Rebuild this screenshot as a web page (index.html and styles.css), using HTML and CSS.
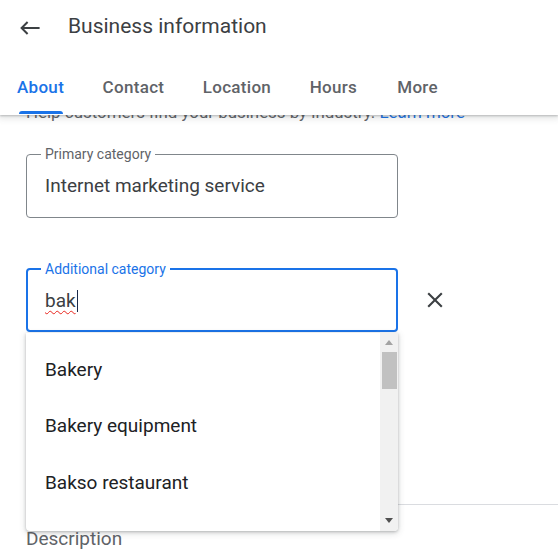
FILE: index.html
```html
<!DOCTYPE html>
<html lang="en">
<head>
<meta charset="utf-8">
<title>Business information</title>
<link rel="stylesheet" href="styles.css">
</head>
<body>
<header class="header">
  <div class="topbar">
    <svg class="back" width="20" height="14" viewBox="0 0 20 14" aria-hidden="true">
      <path d="M19.6 7H1.6M7.6 1L1.6 7L7.6 13" fill="none" stroke="#3c4043" stroke-width="2"/>
    </svg>
    <h1 class="title">Business information</h1>
  </div>
  <nav class="tabs">
    <div class="tab active"><span class="tab-label">About</span><span class="indicator"></span></div>
    <div class="tab"><span class="tab-label">Contact</span><span class="indicator"></span></div>
    <div class="tab"><span class="tab-label">Location</span><span class="indicator"></span></div>
    <div class="tab"><span class="tab-label">Hours</span><span class="indicator"></span></div>
    <div class="tab"><span class="tab-label">More</span><span class="indicator"></span></div>
  </nav>
</header>
<main class="content">
  <p class="help">Help customers find your business by industry. <span class="link">Learn more</span></p>
  <fieldset class="field">
    <legend class="label">Primary category</legend>
    <div class="value">Internet marketing service</div>
  </fieldset>
  <div class="row">
    <fieldset class="field focused">
      <legend class="label">Additional category</legend>
      <div class="value"><span class="misspelled">bak</span><span class="caret"></span></div>
    </fieldset>
    <svg class="close" width="16" height="16" viewBox="0 0 16 16" aria-hidden="true">
      <path d="M1.2 1.2L14.8 14.8M14.8 1.2L1.2 14.8" fill="none" stroke="#3c4043" stroke-width="2.1"/>
    </svg>
    <div class="menu">
      <ul class="options">
        <li class="option">Bakery</li>
        <li class="option">Bakery equipment</li>
        <li class="option">Bakso restaurant</li>
      </ul>
      <div class="scrollbar">
        <div class="sb-btn up"><span class="tri-up"></span></div>
        <div class="thumb"></div>
        <div class="sb-space"></div>
        <div class="sb-btn down"><span class="tri-down"></span></div>
      </div>
    </div>
  </div>
  <hr class="divider">
  <div class="section-title">Description</div>
</main>
</body>
</html>
```
FILE: styles.css
```css
* { box-sizing: border-box; }
html, body { margin: 0; padding: 0; background: #fff; }
body {
  font-family: Roboto, "Liberation Sans", Arial, sans-serif;
  color: #3c4043;
  width: 558px;
  height: 551px;
  overflow: hidden;
}
.header {
  position: relative;
  z-index: 2;
  background: #fff;
  padding-bottom: 1px;
  box-shadow: 0 1px 2px rgba(60,64,67,.3), 0 2px 6px 2px rgba(60,64,67,.12);
}
.topbar {
  display: flex;
  align-items: center;
  height: 52px;
}
.back { margin-left: 20px; margin-top: 3px; flex: none; }
.title {
  margin: 0 0 0 28px;
  font-size: 21px;
  font-weight: 400;
  line-height: 52px;
  color: #3c4043;
}
.tabs {
  display: flex;
  gap: 38.5px;
  padding-left: 17px;
}
.tab {
  display: flex;
  flex-direction: column;
  align-items: center;
  padding-top: 25px;
}
.tab-label {
  font-size: 17px;
  font-weight: 500;
  letter-spacing: 0.3px;
  line-height: 20px;
  color: #5f6368;
}
.indicator {
  width: 44px;
  height: 3px;
  margin-top: 14px;
  border-radius: 3px 3px 0 0;
  background: transparent;
}
.tab.active .tab-label { color: #1a73e8; }
.tab.active .indicator { background: #1a73e8; }

.content { padding-left: 26px; }
.help {
  margin: -13px 0 0;
  font-size: 16.9px;
  line-height: 20px;
  color: #5f6368;
  white-space: nowrap;
}
.link { color: #1a73e8; }

.field {
  margin: 24px 0 0;
  width: 371.5px;
  border: 1px solid #80868b;
  border-radius: 4px;
  padding: 0 14px 19px;
  min-width: 0;
}
.label {
  padding: 0 4px;
  font-size: 14px;
  line-height: 16px;
  color: #5f6368;
}
.value {
  padding: 12px 0 0 4px;
  font-size: 19px;
  line-height: 24px;
  color: #3c4043;
}
.row {
  position: relative;
  display: flex;
  align-items: center;
  margin-top: 43px;
}
.row .field { margin-top: 0; }
.field.focused {
  border: 2px solid #1a73e8;
  padding: 0 13px 17px;
}
.field.focused .label { color: #1a73e8; }
.misspelled {
  text-decoration: underline wavy #e8261e;
  text-decoration-thickness: 1px;
  text-underline-offset: 3px;
}
.caret {
  display: inline-block;
  width: 1px;
  height: 22px;
  margin-left: 1px;
  vertical-align: -5px;
  background: #1b2a4a;
}
.close { margin-left: 29px; margin-top: 6px; flex: none; }

.menu {
  position: absolute;
  left: 0;
  top: calc(100% + 1px);
  width: 372px;
  height: 198px;
  display: flex;
  background: #fff;
  border-radius: 0 0 4px 4px;
  overflow: hidden;
  box-shadow: 0 1px 3px rgba(60,64,67,.3), 0 2px 6px 1px rgba(60,64,67,.15);
  z-index: 3;
}
.options {
  flex: 1;
  list-style: none;
  margin: 0;
  padding: 9px 0 0;
}
.option {
  height: 56.3px;
  line-height: 56px;
  padding-left: 19px;
  font-size: 19px;
  color: #202124;
}
.scrollbar {
  width: 18px;
  flex: none;
  display: flex;
  flex-direction: column;
  background: #f1f1f1;
}
.sb-btn {
  display: flex;
  align-items: center;
  justify-content: center;
}
.sb-btn.up { height: 19px; }
.sb-btn.down { height: 22px; }
.tri-up {
  width: 0; height: 0;
  border-left: 4.5px solid transparent;
  border-right: 4.5px solid transparent;
  border-bottom: 5px solid #a3a3a3;
}
.tri-down {
  width: 0; height: 0;
  border-left: 4.5px solid transparent;
  border-right: 4.5px solid transparent;
  border-top: 5px solid #505050;
}
.thumb {
  width: 15px;
  height: 37px;
  margin: 0 auto;
  background: #c1c1c1;
}
.sb-space { flex: 1; }

.divider {
  margin: 172px 0 0;
  border: 0;
  border-top: 1px solid #dadce0;
  height: 0;
}
.section-title {
  margin-top: 22px;
  font-size: 19px;
  line-height: 24px;
  color: #5f6368;
}
```
